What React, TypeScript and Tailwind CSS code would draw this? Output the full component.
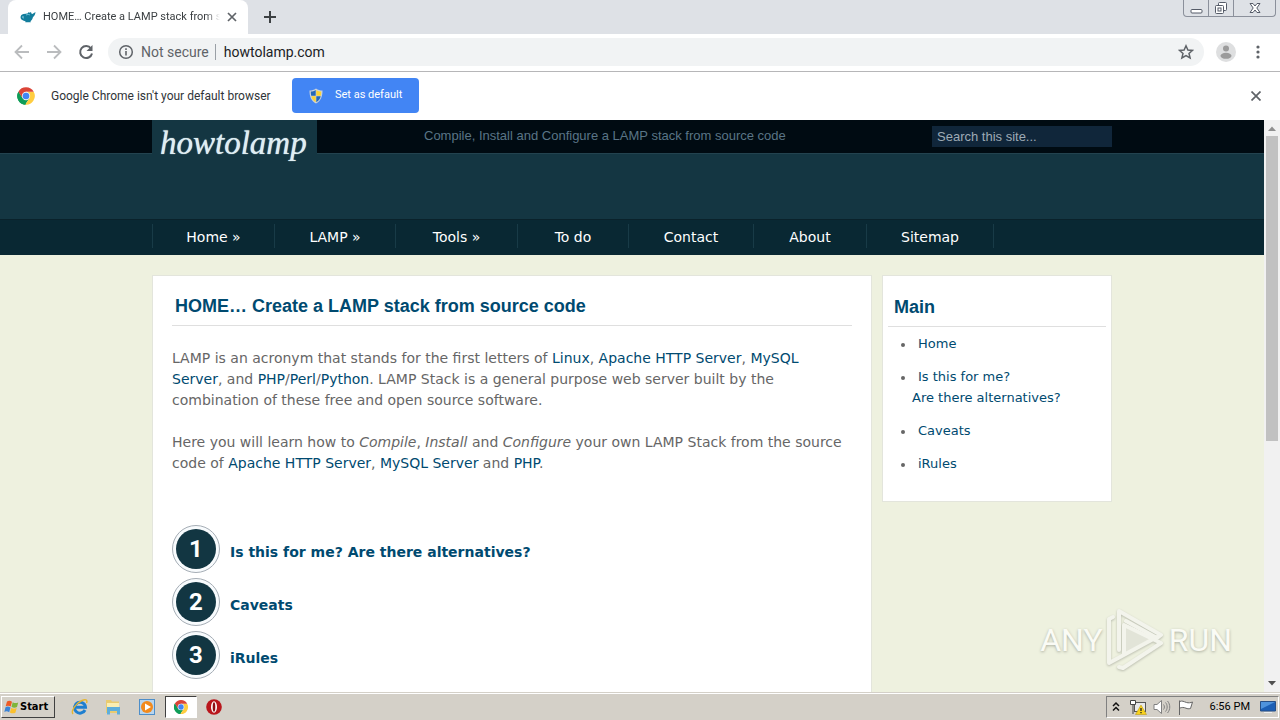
import type { ReactNode } from 'react';

const UI = 'font-[Roboto,sans-serif]';

function A({ children }: { children: ReactNode }) {
  return (
    <a href="#" className="text-[#004a70]">
      {children}
    </a>
  );
}

function ChromeLogo({ className }: { className: string }) {
  return (
    <svg viewBox="0 0 48 48" className={className} aria-hidden="true">
      <circle cx="24" cy="24" r="21" fill="#fff" />
      <path d="M24 24V45A21 21 0 0 1 5.800 13.500L15.300 29Z" fill="#0f9d58" />
      <path d="M15.300 29 5.800 13.500C2.500 20 2 26 5 33S15 44.500 22 45L32.700 29Z" fill="#0f9d58" />
      <path d="M24 14H42.500A21 21 0 0 1 22 45L32.700 29Z" fill="#ffcd40" />
      <path d="M24 14H42.500A21 21 0 0 0 5.800 13.500L15.300 29Z" fill="#db4437" />
      <circle cx="24" cy="24" r="10" fill="#f1f1f1" />
      <circle cx="24" cy="24" r="8" fill="#4285f4" />
    </svg>
  );
}

function TeapotIcon() {
  return (
    <svg viewBox="0 0 16 16" className="size-4 shrink-0" aria-hidden="true">
      <path d="M3.500 5C5 5 6.500 4.500 8 4.300l.6-1.300 1 .8 1.400-.9.400 1.500 1 .6L15.500 3c-.2 2.500-1.300 4-2.700 5.500-.3 1.800-1.300 3-2.300 3.700l.3 1H5.300l.2-1C3 11.500 1 10.800.6 9 .3 6.800 1.500 5.300 3.500 5Z" fill="#137d9c" />
      <path d="M3.400 7C2 7 1.800 9 3.600 9.800Z" fill="#a8dbe8" />
      <path d="M6 6c1.500-.8 3-.6 4 0" stroke="#6ec0d6" fill="none" />
    </svg>
  );
}

function Shield() {
  return (
    <svg viewBox="0 0 16 16" className="size-4" aria-hidden="true">
      <path d="M8 .5C6 2 3.800 2.500 1.500 2.500c0 6 1.500 10.500 6.500 13 5-2.500 6.500-7 6.500-13C12.200 2.500 10 2 8 .5Z" fill="#c9d2dc" />
      <path d="M7.700 2C6.200 3 4.500 3.500 2.800 3.600c0 1.500.1 2.900.4 4.200h4.500Z" fill="#2468b8" />
      <path d="M8.300 2c1.500 1 3.200 1.500 4.900 1.600 0 1.500-.1 2.900-.4 4.200H8.300Z" fill="#fbd334" />
      <path d="M7.700 8.300H3.300c.7 2.700 2 4.600 4.400 6Z" fill="#fbd334" />
      <path d="M8.300 8.300h4.400c-.7 2.700-2 4.600-4.400 6Z" fill="#2468b8" />
    </svg>
  );
}

function TabStrip() {
  return (
    <div className="flex h-[34px] shrink-0 items-stretch bg-[#dee1e6] pl-2">
      <div className="flex w-60 items-center rounded-t-lg bg-white pl-3 pr-2">
        <TeapotIcon />
        <span className="ml-[7px] w-[177px] overflow-hidden whitespace-nowrap text-[11px] text-[#3c4043] [mask-image:linear-gradient(to_right,black_92%,transparent)]">
          HOME… Create a LAMP stack from source code
        </span>
        <button aria-label="Close tab" className="ml-1 flex size-4 items-center justify-center">
          <svg viewBox="0 0 10 10" className="size-[10px]" stroke="#5f6368" strokeWidth="1.700">
            <path d="M1 1 9 9M9 1 1 9" />
          </svg>
        </button>
      </div>
      <button aria-label="New tab" className="ml-3 flex w-5 items-center justify-center">
        <svg viewBox="0 0 12 12" className="size-3" stroke="#3c4043" strokeWidth="2">
          <path d="M6 0V12M0 6H12" />
        </svg>
      </button>
      <div className="ml-auto mr-1 flex h-[17px] items-stretch rounded-b border border-t-0 border-[#8b909b]">
        <button aria-label="Minimize" className="flex w-[25px] items-center justify-center border-r border-[#8b909b]">
          <svg viewBox="0 0 13 13" className="size-[13px]" fill="#fff" stroke="#555b68">
            <rect x="1" y="7.500" width="11" height="3.500" rx="1" />
          </svg>
        </button>
        <button aria-label="Restore" className="flex w-[25px] items-center justify-center border-r border-[#8b909b]">
          <svg viewBox="0 0 14 14" className="size-[14px]" fill="#fff" stroke="#555b68">
            <rect x="4.500" y="1.500" width="8" height="8" rx="1" />
            <rect x="1.500" y="4.500" width="8" height="8" rx="1" />
            <rect x="4" y="7" width="3" height="3" />
          </svg>
        </button>
        <button aria-label="Close window" className="flex w-[41px] items-center justify-center">
          <svg viewBox="0 0 12 12" className="size-3" fill="#fff" stroke="#555b68">
            <path d="M1 1.500h3L6 4l2-2.500h3L7.800 6 11 10.500H8L6 8l-2 2.500H1L4.200 6Z" />
          </svg>
        </button>
      </div>
    </div>
  );
}

function Toolbar() {
  return (
    <div className="flex h-[38px] shrink-0 items-center border-b border-[#b6b6b8] bg-white pb-[2px] pl-3">
      <button aria-label="Back" className="mr-3 flex size-5 items-center justify-center">
        <svg viewBox="0 0 16 16" className="size-4" fill="none" stroke="#babcbe" strokeWidth="1.800">
          <path d="M15 8H2M8 1.500 1.500 8 8 14.500" />
        </svg>
      </button>
      <button aria-label="Forward" className="mr-3 flex size-5 items-center justify-center">
        <svg viewBox="0 0 16 16" className="size-4" fill="none" stroke="#babcbe" strokeWidth="1.800">
          <path d="M1 8H14M8 1.500 14.500 8 8 14.500" />
        </svg>
      </button>
      <button aria-label="Reload" className="mr-3 flex size-5 items-center justify-center">
        <svg viewBox="0 0 16 16" className="size-4" fill="none" stroke="#5f6368" strokeWidth="2">
          <path d="M13 4.500A6 6 0 1 0 14 9.500" />
          <path d="M14.500 1V7H8.500Z" fill="#5f6368" stroke="none" />
        </svg>
      </button>
      <div className="flex h-7 flex-1 items-center rounded-full bg-[#f1f3f4] pl-[10px] pr-[10px] text-sm">
        <svg viewBox="0 0 16 16" className="size-4" aria-hidden="true">
          <circle cx="8" cy="8" r="6.300" fill="none" stroke="#5f6368" strokeWidth="1.500" />
          <path d="M7.200 7h1.600v4.500H7.200ZM7.200 4.300h1.600v1.600H7.200Z" fill="#5f6368" />
        </svg>
        <span className="ml-[7px] whitespace-nowrap text-[#5f6368]">Not secure</span>
        <span className="ml-[6px] mr-2 h-4 w-px bg-[#9aa0a6]" />
        <input aria-label="Address" defaultValue="howtolamp.com" className="min-w-0 flex-1 bg-transparent text-[#202124] outline-none" />
        <button aria-label="Bookmark this page">
          <svg viewBox="0 0 16 16" className="size-4" fill="none" stroke="#5f6368" strokeWidth="1.500">
            <path d="M8 1.800 9.900 6l4.600.4-3.500 3 1.100 4.500L8 11.500l-4.100 2.400L5 9.400l-3.500-3L6.100 6Z" />
          </svg>
        </button>
      </div>
      <button aria-label="Profile" className="ml-3">
        <svg viewBox="0 0 20 20" className="size-5">
          <circle cx="10" cy="10" r="10" fill="#dedfe0" />
          <circle cx="10" cy="6.500" r="3" fill="#9b9b9b" />
          <ellipse cx="10" cy="13.800" rx="5.500" ry="3" fill="#9b9b9b" />
        </svg>
      </button>
      <button aria-label="Menu" className="ml-3 mr-3 flex w-5 justify-center">
        <svg viewBox="0 0 4 14" className="h-[14px] w-1" fill="#5f6368">
          <circle cx="2" cy="2" r="1.600" />
          <circle cx="2" cy="7" r="1.600" />
          <circle cx="2" cy="12" r="1.600" />
        </svg>
      </button>
    </div>
  );
}

function InfoBar() {
  return (
    <div className="flex h-12 shrink-0 items-center bg-white pb-px pl-4 pr-[18px]">
      <ChromeLogo className="size-5" />
      <span className="ml-[15px] w-[229px] whitespace-nowrap text-xs text-[#303438]">Google Chrome isn't your default browser</span>
      <button className="ml-3 flex h-[35px] w-[127px] items-center rounded bg-[#4285f4] pl-4 text-[11px] text-white">
        <Shield />
        <span className="ml-[11px] whitespace-nowrap">Set as default</span>
      </button>
      <button aria-label="Dismiss" className="ml-auto p-px">
        <svg viewBox="0 0 10 10" className="size-[10px]" stroke="#5f6368" strokeWidth="1.700">
          <path d="M.500.500 9.500 9.500M9.500.500.500 9.500" />
        </svg>
      </button>
    </div>
  );
}

const NAV = ['Home »', 'LAMP »', 'Tools »', 'To do', 'Contact', 'About', 'Sitemap'];

function SiteHeader() {
  return (
    <header className="bg-[#143642]">
      <div className="h-[33px] bg-[#000b12]">
        <div className="mx-auto flex w-[960px] items-start">
          <a href="#" className="flex h-[46px] w-[165px] items-start bg-[#143642] pl-2 font-['Liberation_Serif',serif] text-[33px] italic leading-[46px] text-[#dfeef3] [text-shadow:0_0_1px_#dfeef3]">
            howtolamp
          </a>
          <p className="ml-[107px] whitespace-nowrap font-['Liberation_Sans',sans-serif] text-[13px] leading-8 text-[#5a7586]">
            Compile, Install and Configure a LAMP stack from source code
          </p>
          <input
            aria-label="Search"
            placeholder="Search this site..."
            className="ml-auto mt-[6px] h-[21px] w-[180px] bg-[#10263a] px-[5px] font-['Liberation_Sans',sans-serif] text-[13px] text-white outline-none placeholder:text-[#9eabb5]"
          />
        </div>
      </div>
      <div className="h-[66px] border-t border-[#23434f]" />
      <nav className="h-9 border-t border-[#0a222b] bg-[#092833] pt-1">
        <ul className="mx-auto grid w-[960px] grid-cols-[122px_121px_122px_111px_125px_113px_128px] text-sm text-white">
          {NAV.map((n) => (
            <li key={n} className="h-6 border-l border-[#183b47] text-center leading-[26px] last:border-r">
              <a href="#">{n}</a>
            </li>
          ))}
        </ul>
      </nav>
    </header>
  );
}

const STEPS = ['Is this for me? Are there alternatives?', 'Caveats', 'iRules'];

function Article() {
  return (
    <main className="w-[720px] border border-[#e3e5dc] bg-white px-[19px] pb-10 pt-[19px]">
      <h1 className="border-b border-[#dfdfdf] pb-[7px] pl-[3px] font-['Liberation_Sans',sans-serif] text-lg font-bold leading-[23px] text-[#004a70]">
        HOME… Create a LAMP stack from source code
      </h1>
      <div className="mt-[22px] space-y-[21px] whitespace-nowrap text-sm leading-[21px] text-[#666]">
        <p>
          LAMP is an acronym that stands for the first letters of <A>Linux</A>, <A>Apache HTTP Server</A>, <A>MySQL</A>
          <br />
          <A>Server</A>, and <A>PHP</A>/<A>Perl</A>/<A>Python</A>. LAMP Stack is a general purpose web server built by the
          <br />
          combination of these free and open source software.
        </p>
        <p>
          Here you will learn how to <i>Compile</i>, <i>Install</i> and <i>Configure</i> your own LAMP Stack from the source
          <br />
          code of <A>Apache HTTP Server</A>, <A>MySQL Server</A> and <A>PHP</A>.
        </p>
      </div>
      <ul className="mt-[51px] space-y-[5px]">
        {STEPS.map((s, i) => (
          <li key={s} className="flex h-12 items-center">
            <span className="flex size-12 items-center justify-center rounded-full border border-[#a5adb5] bg-[#f8fbfd]">
              <span className="flex size-10 items-center justify-center rounded-full bg-[#123642] font-[Roboto,sans-serif] text-2xl font-bold text-white">
                {i + 1}
              </span>
            </span>
            <a href="#" className="ml-[10px] pt-[5px] text-sm font-bold text-[#004a70]">
              {s}
            </a>
          </li>
        ))}
      </ul>
    </main>
  );
}

const BULLET =
  "before:-ml-[11px] before:mr-[13px] before:inline-block before:size-1 before:rounded-full before:bg-[#666] before:align-middle before:content-['']";

function Sidebar() {
  return (
    <aside className="w-[230px] border border-[#e3e5dc] bg-white px-[5px] pb-[27px] pt-5">
      <h2 className="border-b border-[#dfdfdf] pb-[7px] pl-[6px] font-['Liberation_Sans',sans-serif] text-lg font-bold leading-[23px] text-[#004a70]">
        Main
      </h2>
      <ul className="ml-6 mt-[6px] space-y-3 text-[13px] leading-[21px]">
        <li className={BULLET}>
          <A>Home</A>
        </li>
        <li className={BULLET}>
          <A>
            Is this for me?
            <br />
            Are there alternatives?
          </A>
        </li>
        <li className={BULLET}>
          <A>Caveats</A>
        </li>
        <li className={BULLET}>
          <A>iRules</A>
        </li>
      </ul>
    </aside>
  );
}

function Scrollbar() {
  return (
    <div className="flex w-4 shrink-0 flex-col items-center bg-[#f1f1f1]" aria-hidden="true">
      <svg viewBox="0 0 16 16" className="size-4" fill="#8f8f8f">
        <path d="M4 11 8 6.500 12 11Z" />
      </svg>
      <div className="h-[305px] w-3 bg-[#c1c1c1]" />
      <svg viewBox="0 0 16 16" className="mt-auto size-4" fill="#505050">
        <path d="M4 5H12L8 9.500Z" />
      </svg>
    </div>
  );
}

function Watermark() {
  return (
    <div className="pointer-events-none absolute bottom-5 right-12 flex h-16 items-center font-[Roboto,sans-serif] text-[32px] leading-none text-[#fafbf5] [text-shadow:0_1px_3px_#a9ac9e]">
      <span>ANY</span>
      <svg viewBox="0 0 60 64" className="mx-[3px] h-16 w-[60px] drop-shadow-[0_1px_1px_#b9bcae]" fill="none" strokeWidth="4" strokeLinejoin="round" strokeLinecap="round">
        <path d="M18 17V46L46 30Z" fill="#e2e4d8" />
        <g stroke="#f3f4ec">
          <path d="M13 42V3L55 27 51 30 20 13" />
          <path d="M7 9 3 11V55L51 29" />
          <path d="M13 59 17 60 55 35 18 17V46" />
        </g>
      </svg>
      <span>RUN</span>
    </div>
  );
}

function Taskbar() {
  return (
    <footer className="flex h-7 shrink-0 items-center border-t border-[#d4d0c8] bg-[#d4d0c8] shadow-[inset_0_1px_0_#fff]">
      <button className="ml-px mt-px flex h-[22px] w-[54px] items-center border border-b-[#404040] border-l-white border-r-[#404040] border-t-white pl-[2px] font-['DejaVu_Sans_Condensed','DejaVu_Sans',sans-serif] text-[11px] font-bold text-black">
        <svg viewBox="0 0 16 16" className="size-4 shrink-0" aria-hidden="true">
          <path d="M3 2.500C5 1.300 6.500 1.800 8 2.800L6.700 7.500C5 6.500 3.500 6.300 1.700 7.200Z" fill="#ee5a24" />
          <path d="M8.700 3.200c1.700 1 3.500 1.200 5.500.2L13 8c-2 1-3.800.8-5.500-.2Z" fill="#7fb539" />
          <path d="M1.500 8.200c1.800-1 3.400-.7 5 .3l-1.300 4.700C3.600 12.200 2 12 .3 12.900Z" fill="#3b83d6" />
          <path d="M7.200 8.900c1.800 1 3.600 1.100 5.500.2l-1.300 4.600c-1.900 1-3.700.8-5.500-.2Z" fill="#fbc02d" />
        </svg>
        Start
      </button>
      <div className="ml-4 mt-px flex items-center">
        <button aria-label="Internet Explorer" className="w-[17px]">
          <svg viewBox="0 0 18 18" className="size-[18px]" fill="none">
            <path d="M14 12A5.500 5.500 0 1 1 14.500 9.300H5" stroke="#1f7fd0" strokeWidth="3" />
            <path d="M2 16C-.5 13 5 5 11 2.500c3-1.300 6-1 4.500 2.500" stroke="#e6b52f" strokeWidth="1.400" />
          </svg>
        </button>
        <button aria-label="Windows Explorer" className="ml-4">
          <svg viewBox="0 0 18 18" className="size-[18px]">
            <path d="M2 2h5l1 1.500h7V15H2Z" fill="#e9cb70" />
            <path d="M3 5h12v5H3Z" fill="#faeeb2" />
            <path d="M3 9h13v7.500h-3V13H6v3.500H3Z" fill="#5eaedb" />
          </svg>
        </button>
        <button aria-label="Media Player" className="ml-4">
          <svg viewBox="0 0 18 18" className="size-[18px]">
            <rect x="1.500" y="1.500" width="15" height="15" fill="#b8d5ee" stroke="#4d8ec9" />
            <circle cx="9" cy="9" r="6" fill="#f28a1d" />
            <path d="M7 5.500 13 9 7 12.500Z" fill="#fff" />
          </svg>
        </button>
        <button aria-label="Google Chrome" className="ml-[9px] flex h-[22px] w-8 items-center justify-center border border-b-white border-l-[#404040] border-r-white border-t-[#404040] bg-white">
          <ChromeLogo className="size-4" />
        </button>
        <button aria-label="Opera" className="ml-2">
          <svg viewBox="0 0 18 18" className="size-[18px]">
            <circle cx="9" cy="9" r="7.800" fill="#b9161c" />
            <ellipse cx="9" cy="9" rx="3" ry="5.800" fill="#fff" />
            <ellipse cx="9" cy="9" rx="1.300" ry="4.800" fill="#8e0f14" />
          </svg>
        </button>
      </div>
      <div className="ml-auto mr-px mt-px flex h-[22px] items-center border border-b-white border-l-[#808080] border-r-white border-t-[#808080] pl-1 pr-[2px]">
        <button aria-label="Show hidden icons">
          <svg viewBox="0 0 10 12" className="h-3 w-[10px]" fill="none" stroke="#111" strokeWidth="1.500">
            <path d="M2 5 5 2 8 5M2 9.500 5 6.500 8 9.500" />
          </svg>
        </button>
        <svg viewBox="0 0 18 16" className="ml-2 h-4 w-[18px]" aria-hidden="true">
          <rect x="5.500" y="3.500" width="11" height="9" fill="#e8e8e8" stroke="#555" />
          <path d="M1.500 1.500h5v4h-5ZM4 5.500V15" fill="#fff" stroke="#444" />
          <path d="M12 6 17.500 15.500H6.500Z" fill="#f8d21c" stroke="#b89000" strokeWidth=".5" />
          <path d="M12 9v3M12 13v1.300" stroke="#222" strokeWidth="1.300" />
        </svg>
        <svg viewBox="0 0 18 16" className="ml-[6px] h-4 w-[18px]" fill="none" stroke="#808080" aria-hidden="true">
          <path d="M1 5.500H4L8.500 1.500V14.500L4 10.500H1Z" fill="#fff" />
          <path d="M10.500 5.500c1.200 1.500 1.200 3.500 0 5M12.500 3.500c2.200 2.500 2.200 6.500 0 9M14.500 2c3 3.500 3 8.500 0 12" />
        </svg>
        <svg viewBox="0 0 18 16" className="ml-[6px] h-4 w-[18px]" fill="#fff" stroke="#666" aria-hidden="true">
          <path d="M2.500 16V1.500M2.500 2.500c3-1 4 0 7 1 2 .6 4 .3 6-.5l-2 6.500c-2 .5-3 .3-4.500-.3-2.500-1-4-1-6.500 0" />
        </svg>
        <span className="ml-[15px] whitespace-nowrap text-[11px] text-black">6:56 PM</span>
        <svg viewBox="0 0 16 14" className="ml-[10px] h-[14px] w-4" aria-hidden="true">
          <path d="M.500 1.500h15v9.500H.500Z" fill="#1c5fb5" stroke="#274f86" />
          <path d="M1 2h14L1 9Z" fill="#4f93dc" />
          <path d="M4 12.500h8" stroke="#eee" />
        </svg>
      </div>
    </footer>
  );
}

export default function App() {
  return (
    <div className={`flex h-screen flex-col overflow-hidden ${UI}`}>
      <TabStrip />
      <Toolbar />
      <InfoBar />
      <div className="relative flex min-h-0 flex-1">
        <div className="min-w-0 flex-1 overflow-hidden bg-[#eef1df] font-['DejaVu_Sans',sans-serif]">
          <SiteHeader />
          <div className="mx-auto mt-5 flex w-[960px] items-start justify-between">
            <Article />
            <Sidebar />
          </div>
        </div>
        <Scrollbar />
        <Watermark />
      </div>
      <Taskbar />
    </div>
  );
}
